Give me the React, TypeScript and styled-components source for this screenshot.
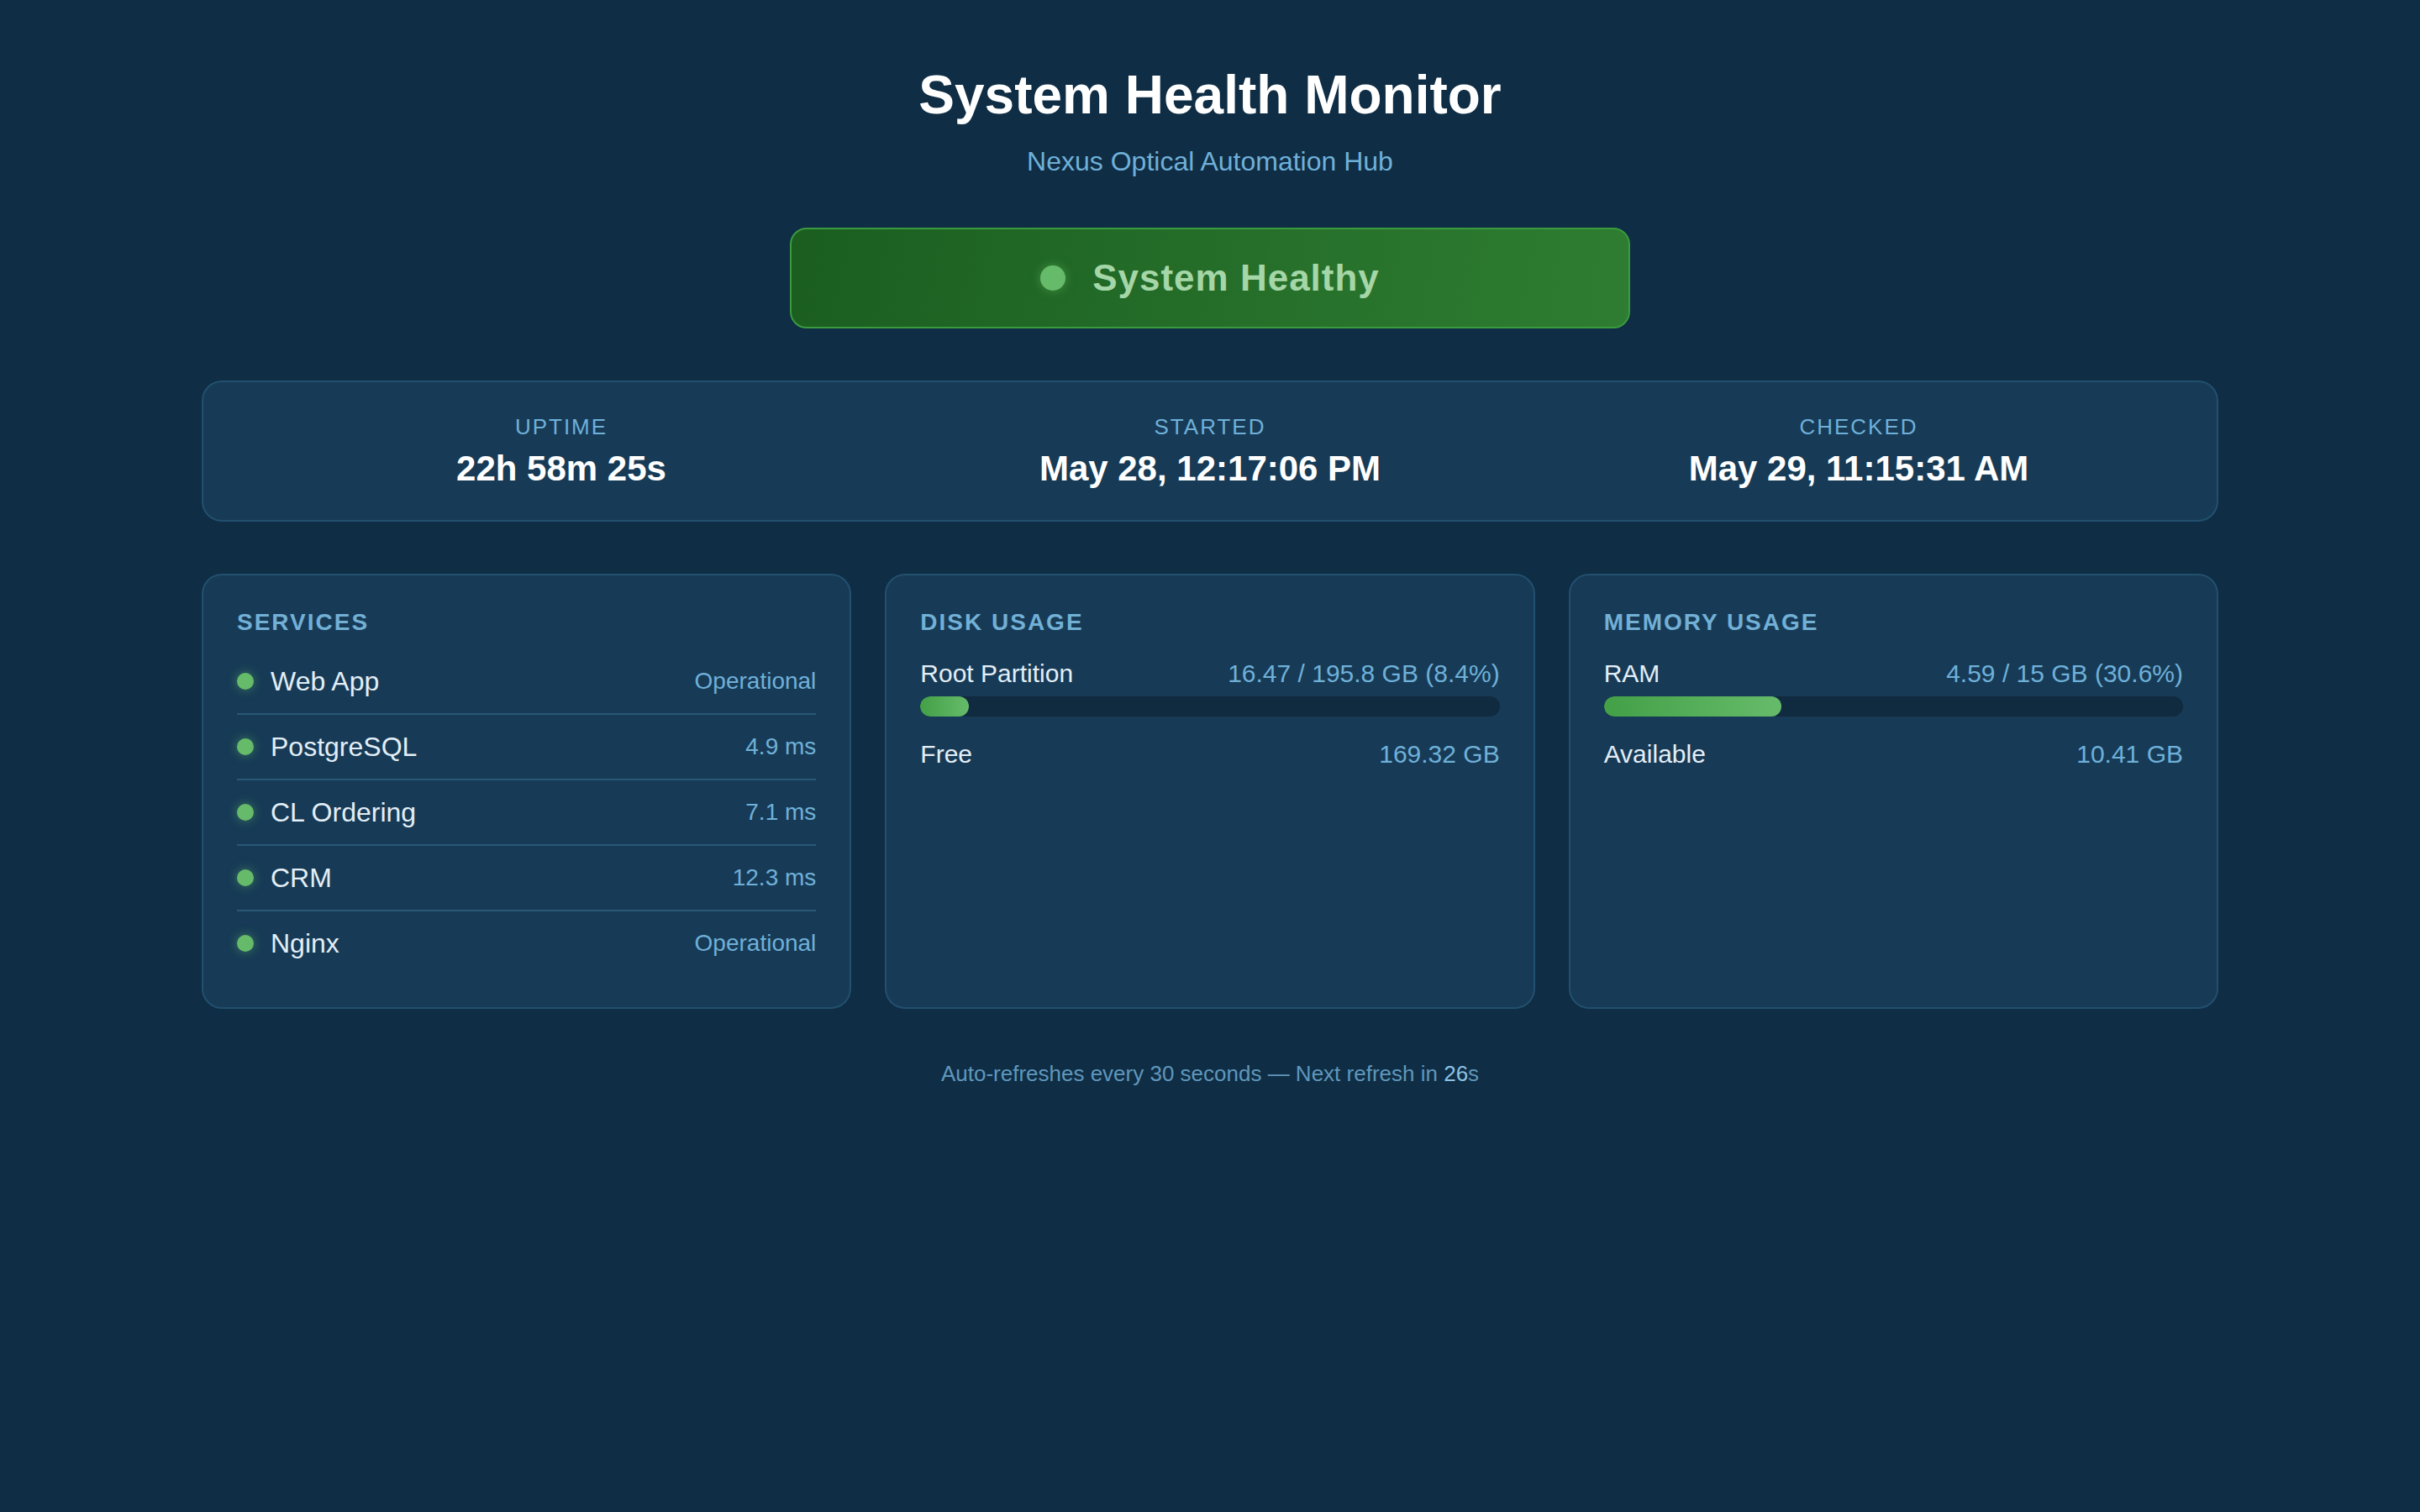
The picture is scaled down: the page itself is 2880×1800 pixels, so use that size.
import React from "react";
import styled, { createGlobalStyle } from "styled-components";

const Global = createGlobalStyle`
  html { zoom: 2; }
  body { margin: 0; background: #0f2d44; font-family: "Liberation Sans", Arial, sans-serif; color: #e6f0f7; }
`;
const Page = styled.div`
  max-width: 1200px; margin: 0 auto; padding: 38px 0 40px;
  display: flex; flex-direction: column; align-items: center;
`;
const Title = styled.h1`margin: 0; font-size: 32px; font-weight: 700; color: #fff;`;
const Sub = styled.div`margin-top: 12px; font-size: 16px; color: #6fb0d9;`;
const Banner = styled.div`
  margin-top: 30px; width: 500px; height: 60px; box-sizing: border-box;
  border: 1px solid #3a9a40; border-radius: 10px;
  background: linear-gradient(100deg, #1b5e20, #2e7d32);
  display: flex; align-items: center; justify-content: center; gap: 16px;
  font-size: 22px; font-weight: 700; color: #a5d6a7; letter-spacing: 0.5px;
`;
const Dot = styled.span<{ size: number }>`
  width: ${p => p.size}px; height: ${p => p.size}px; border-radius: 50%;
  background: #66bb6a; box-shadow: 0 0 6px rgba(102,187,106,0.5); flex: none;
`;
const StatsCard = styled.div`
  margin-top: 31px; width: 100%; height: 84px; box-sizing: border-box;
  background: #173b56; border: 1px solid #22506f; border-radius: 12px;
  display: grid; grid-template-columns: repeat(3, 1fr); align-items: center; padding: 0 20px;
`;
const Stat = styled.div`text-align: center;`;
const StatLabel = styled.div`font-size: 13px; color: #6fb0d9; letter-spacing: 1px; text-transform: uppercase;`;
const StatValue = styled.div`margin-top: 5px; font-size: 21px; font-weight: 700; color: #fff;`;
const Grid = styled.div`
  margin-top: 31px; width: 100%; display: grid; grid-template-columns: repeat(3, 1fr); gap: 20px;
`;
const Card = styled.div`
  height: 259px; box-sizing: border-box; padding: 20px;
  background: #173b56; border: 1px solid #22506f; border-radius: 12px;
`;
const CardTitle = styled.div`
  font-size: 14px; font-weight: 700; color: #72b0d6; letter-spacing: 1px; text-transform: uppercase; margin-bottom: 8px;
`;
const SvcRow = styled.div`
  display: flex; align-items: center; gap: 10px; height: 38px; font-size: 16px; color: #e3eef6;
  & + & { border-top: 1px solid #2a5878; }
`;
const Name = styled.span`flex: 1;`;
const Val = styled.span`font-size: 14px; color: #6fb0d9;`;
const KV = styled.div<{ big?: boolean }>`
  display: flex; justify-content: space-between; align-items: center; font-size: 15px; color: #e3eef6;
  margin-top: ${p => (p.big ? 14 : 4)}px;
  & > span:last-child { color: #6fb0d9; }
`;
const Track = styled.div`margin-top: 5px; height: 12px; border-radius: 6px; background: #102a3f; overflow: hidden;`;
const Fill = styled.div`height: 100%; border-radius: 6px; background: linear-gradient(90deg, #43a047, #66bb6a);`;
const Footer = styled.div`margin-top: 31px; font-size: 13px; color: #5f97bc; b { font-weight: 400; color: #8cc3e4; }`;

const services = [
  ["Web App", "Operational"], ["PostgreSQL", "4.9 ms"], ["CL Ordering", "7.1 ms"],
  ["CRM", "12.3 ms"], ["Nginx", "Operational"],
];

export default function App() {
  return (
    <>
      <Global />
      <Page>
        <Title>System Health Monitor</Title>
        <Sub>Nexus Optical Automation Hub</Sub>
        <Banner><Dot size={15} />System Healthy</Banner>
        <StatsCard>
          <Stat><StatLabel>Uptime</StatLabel><StatValue>22h 58m 25s</StatValue></Stat>
          <Stat><StatLabel>Started</StatLabel><StatValue>May 28, 12:17:06 PM</StatValue></Stat>
          <Stat><StatLabel>Checked</StatLabel><StatValue>May 29, 11:15:31 AM</StatValue></Stat>
        </StatsCard>
        <Grid>
          <Card>
            <CardTitle>Services</CardTitle>
            {services.map(([n, v]) => (
              <SvcRow key={n}><Dot size={10} /><Name>{n}</Name><Val>{v}</Val></SvcRow>
            ))}
          </Card>
          <Card>
            <CardTitle>Disk Usage</CardTitle>
            <KV big><span>Root Partition</span><span>16.47 / 195.8 GB (8.4%)</span></KV>
            <Track><Fill style={{ width: "8.4%" }} /></Track>
            <KV big><span>Free</span><span>169.32 GB</span></KV>
          </Card>
          <Card>
            <CardTitle>Memory Usage</CardTitle>
            <KV big><span>RAM</span><span>4.59 / 15 GB (30.6%)</span></KV>
            <Track><Fill style={{ width: "30.6%" }} /></Track>
            <KV big><span>Available</span><span>10.41 GB</span></KV>
          </Card>
        </Grid>
        <Footer>Auto-refreshes every 30 seconds — Next refresh in <b>26</b>s</Footer>
      </Page>
    </>
  );
}
